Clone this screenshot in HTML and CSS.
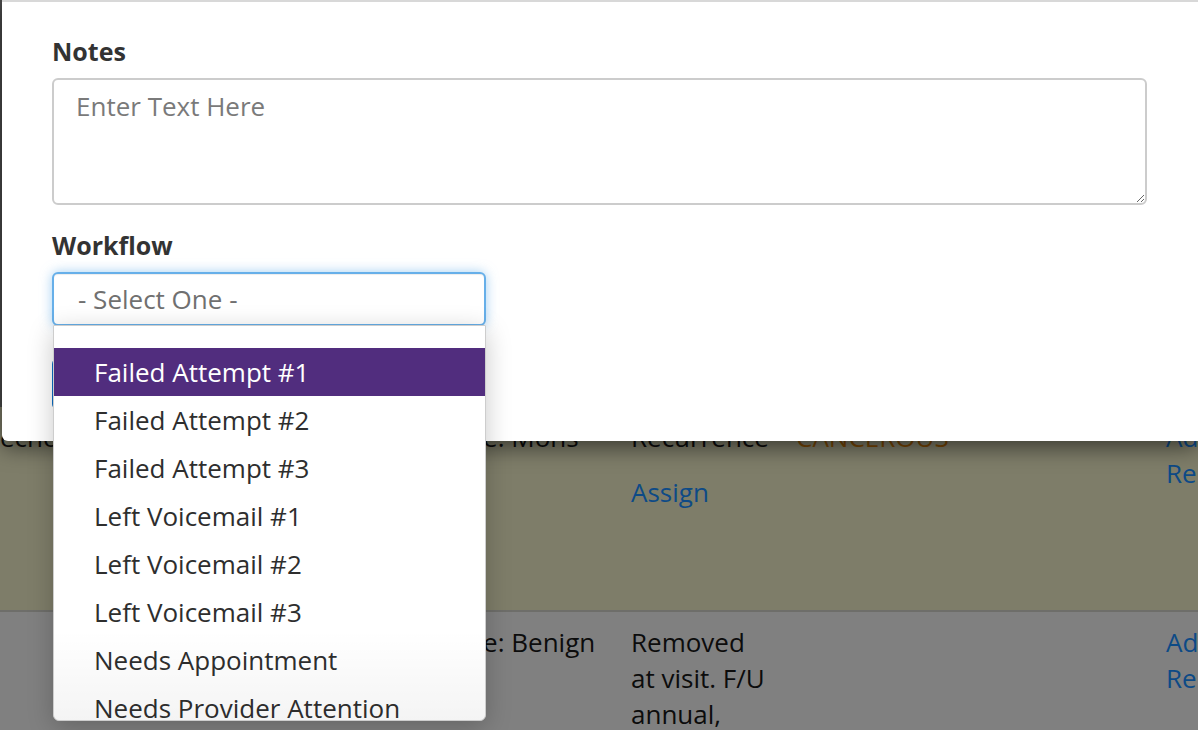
FILE: index.html
```html
<!DOCTYPE html>
<html lang="en">
<head>
<meta charset="utf-8">
<title>Workflow</title>
<link rel="stylesheet" href="styles.css">
</head>
<body>
<div class="page">
  <div class="page-top"></div>
  <div class="row row-warning">
    <div class="cell">echo</div>
    <div class="cell">Site: Mons</div>
    <div class="cell">
      <div>Recurrence</div>
      <a class="link assign">Assign</a>
    </div>
    <div class="cell status-cancer">CANCEROUS</div>
    <div class="cell actions"><a class="link">Ad</a><a class="link">Re</a></div>
  </div>
  <div class="row row-default">
    <div class="cell"></div>
    <div class="cell">Site: Benign</div>
    <div class="cell">Removed<br>at visit. F/U<br>annual,</div>
    <div class="cell"></div>
    <div class="cell actions"><a class="link">Ad</a><a class="link">Re</a></div>
  </div>
</div>

<div class="modal">
  <div class="form-group">
    <label class="label">Notes</label>
    <textarea class="notes" placeholder="Enter Text Here"></textarea>
  </div>
  <div class="form-group workflow">
    <label class="label">Workflow</label>
    <div class="select-wrap">
      <div class="select">- Select One -</div>
      <div class="dropdown">
        <div class="option option-blank"></div>
        <div class="option selected">Failed Attempt #1</div>
        <div class="option">Failed Attempt #2</div>
        <div class="option">Failed Attempt #3</div>
        <div class="option">Left Voicemail #1</div>
        <div class="option">Left Voicemail #2</div>
        <div class="option">Left Voicemail #3</div>
        <div class="option">Needs Appointment</div>
        <div class="option">Needs Provider Attention</div>
      </div>
    </div>
  </div>
  <div class="button-row">
    <button class="btn-primary" aria-label="Save"></button>
  </div>
</div>
</body>
</html>
```
FILE: styles.css
```css
html, body {
  margin: 0;
  padding: 0;
}

body {
  width: 1198px;
  height: 730px;
  overflow: hidden;
  position: relative;
  font-family: "Open Sans", "Liberation Sans", sans-serif;
  background: #808080;
}

/* ---------- dimmed page behind the modal ---------- */
.page {
  display: flex;
  flex-direction: column;
}

.page-top {
  height: 407px;
  background: #4a4a4a;
}

.row {
  display: grid;
  grid-template-columns: 453px 178px 165px 370px 1fr;
  padding-top: 12px;
  font-size: 26px;
  line-height: 36px;
  color: #0c0c0c;
  white-space: nowrap;
}

.row-warning {
  height: 205px;
  box-sizing: border-box;
  background: #7e7d69;
  border-bottom: 2px solid #6e6e6a;
}

.row-default {
  height: 130px;
  box-sizing: border-box;
  background: #808080;
}

.cell {
  display: flex;
  flex-direction: column;
  align-items: flex-start;
}

.link {
  color: #0d4a86;
  text-decoration: none;
}

.assign {
  margin-top: 19px;
}

.status-cancer {
  color: #7a4806;
}

/* ---------- modal ---------- */
.modal {
  position: absolute;
  left: 2px;
  right: 0;
  top: 0;
  box-sizing: border-box;
  padding: 31px 0 31px 50px;
  background: #ffffff;
  border-top: 2px solid #d8d8d8;
  border-bottom-left-radius: 6px;
  box-shadow: 0 6px 22px rgba(0, 0, 0, 0.55);
  display: flex;
  flex-direction: column;
}

.form-group {
  display: flex;
  flex-direction: column;
  width: 1095px;
}

.workflow {
  margin-top: 22px;
}

.label {
  font-size: 25px;
  line-height: 36px;
  font-weight: 700;
  color: #333333;
  margin-bottom: 9px;
}

.notes {
  display: block;
  height: 127px;
  width: 1095px;
  box-sizing: border-box;
  margin: 0;
  padding: 8px 22px;
  border: 2px solid #cccccc;
  border-radius: 6px;
  font-family: "Open Sans", "Liberation Sans", sans-serif;
  font-size: 26px;
  line-height: 36px;
  color: #555555;
  background: #ffffff;
  outline: none;
}

.notes::placeholder {
  color: #7a7a7a;
  opacity: 1;
}

.select-wrap {
  position: relative;
  width: 434px;
}

.select {
  height: 54px;
  box-sizing: border-box;
  padding: 0 24px;
  display: flex;
  align-items: center;
  border: 2px solid #66afe9;
  border-radius: 6px;
  box-shadow: inset 0 1px 1px rgba(0, 0, 0, 0.075), 0 0 12px rgba(102, 175, 233, 0.6);
  font-size: 26px;
  color: #707070;
  background: #ffffff;
}

.button-row {
  margin-top: 32px;
  display: flex;
}

.btn-primary {
  width: 150px;
  height: 52px;
  border: none;
  border-radius: 6px;
  background: #0b6dc3;
}

/* ---------- open dropdown list ---------- */
.dropdown {
  position: absolute;
  z-index: 5;
  left: 1px;
  top: calc(100% - 1px);
  width: 433px;
  height: 396px;
  box-sizing: border-box;
  overflow: hidden;
  background: #ffffff;
  border: 1px solid #cdcdcd;
  border-radius: 1px 1px 6px 6px;
  box-shadow: 0 6px 26px rgba(0, 0, 0, 0.22);
}

.dropdown::after {
  content: "";
  position: absolute;
  left: 0;
  right: 0;
  bottom: 0;
  height: 90px;
  background: linear-gradient(to bottom, rgba(0, 0, 0, 0), rgba(0, 0, 0, 0.045));
  pointer-events: none;
}

.option {
  height: 48px;
  flex-shrink: 0;
  display: flex;
  align-items: center;
  padding-left: 40px;
  font-size: 26px;
  color: #2e2e2e;
  white-space: nowrap;
}

.option-blank {
  height: 22px;
}

.option.selected {
  background: #512d7e;
  color: #ffffff;
}
```
